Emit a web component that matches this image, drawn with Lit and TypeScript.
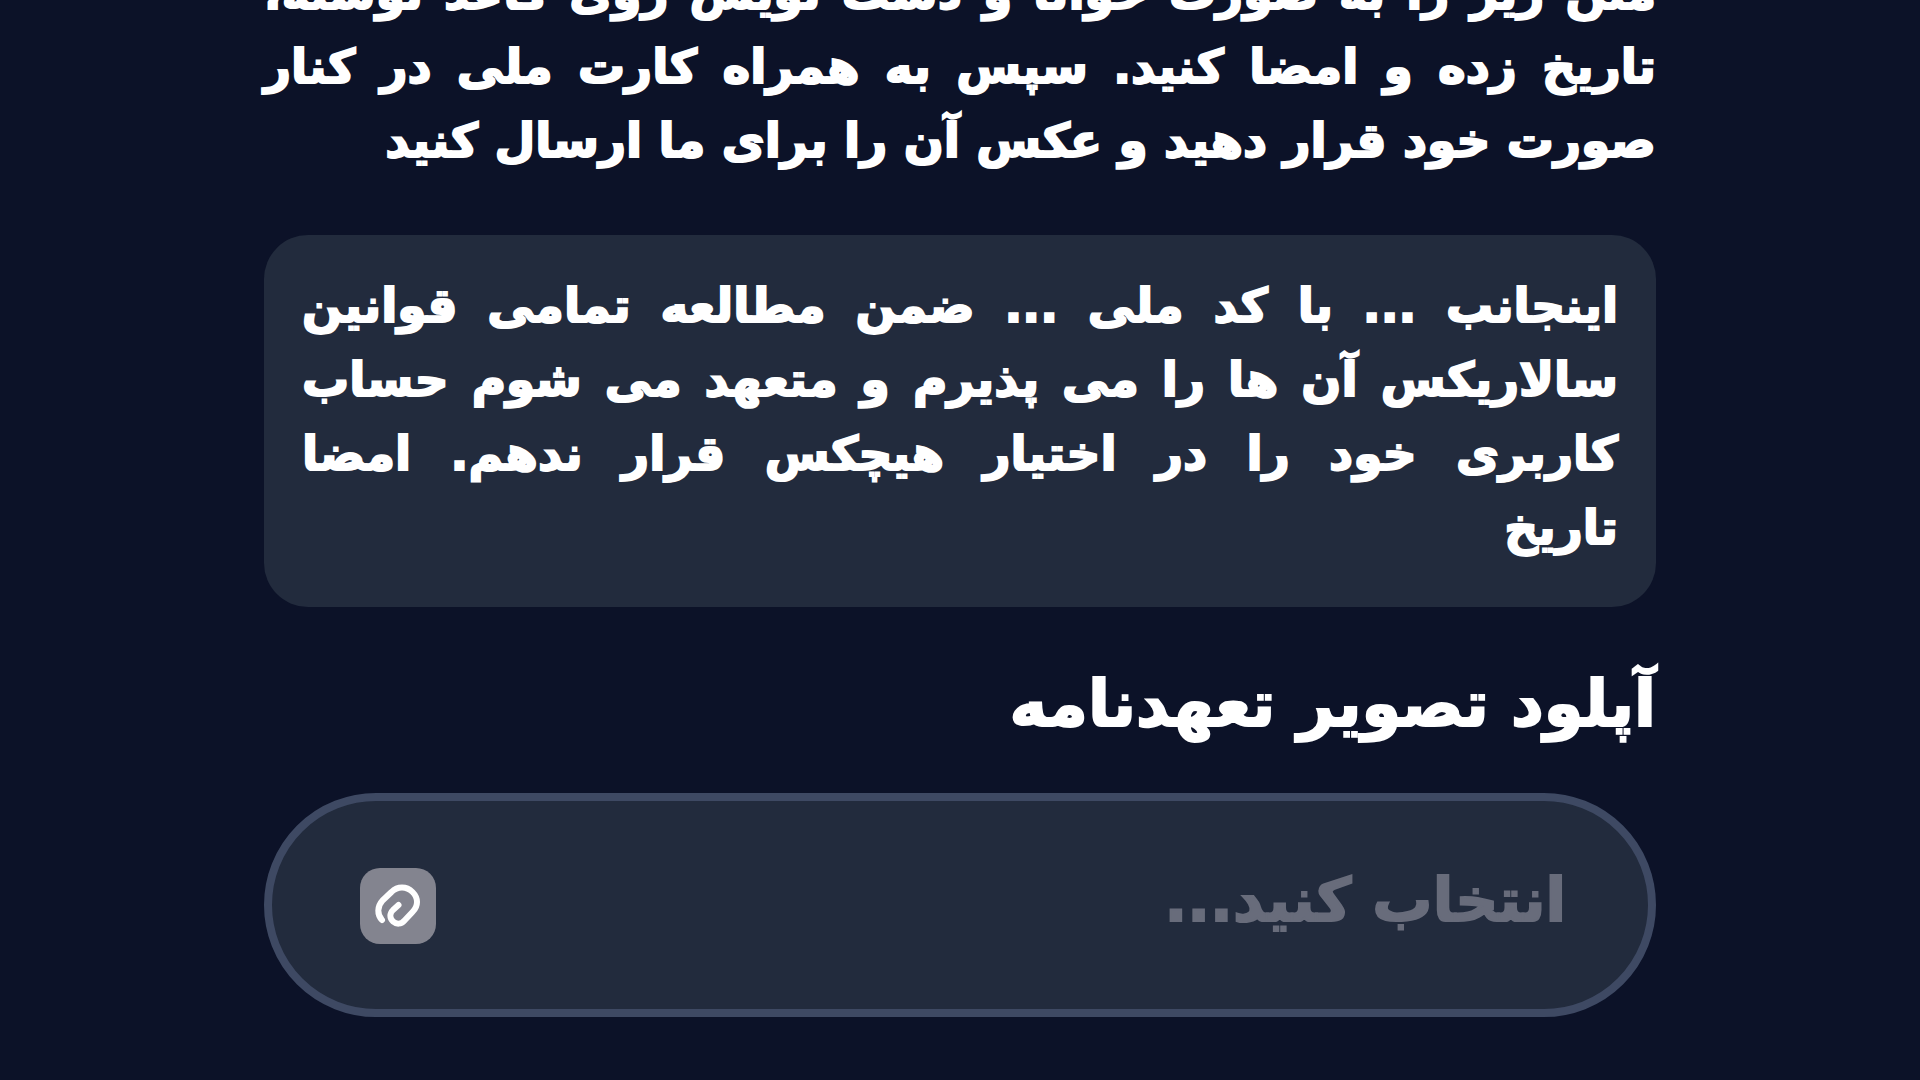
import { LitElement, html, css } from "lit";
import { customElement, state } from "lit/decorators.js";

@customElement("app-root")
export class AppRoot extends LitElement {
  @state() private fileName = "";

  static styles = css`
    :host {
      display: block;
      min-height: 100vh;
      overflow: hidden;
      background: #0c1228;
      color: #fff;
      font-family: "DejaVu Sans", sans-serif;
      font-weight: 700;
      -webkit-text-stroke: 2px currentColor;
    }
    * {
      box-sizing: border-box;
    }
    .page {
      width: 72.5%;
      margin: -44px auto 0;
    }
    .text {
      margin: 0;
      font-size: 47px;
      line-height: 74px;
    }
    .line {
      display: block;
      white-space: nowrap;
      text-align: justify;
      text-align-last: justify;
    }
    .last {
      text-align-last: start;
    }
    .card {
      margin: 57px 0 52px;
      padding: 34px 38px 42px;
      border-radius: 44px;
      background: #222b3d;
    }
    .label {
      display: block;
      font-size: 64px;
      line-height: 90px;
      margin-bottom: 44px;
    }
    .field {
      display: flex;
      align-items: center;
      justify-content: space-between;
      height: 224px;
      padding: 2px 82px 0 88px;
      border: 8px solid #3e4963;
      border-radius: 112px;
      background: #222b3d;
    }
    .input {
      flex: 1;
      min-width: 0;
      padding: 0 0 12px;
      border: 0;
      outline: 0;
      background: none;
      color: #fff;
      font: inherit;
      font-size: 60px;
    }
    .input::placeholder {
      color: #686c7b;
      opacity: 1;
    }
    .attach {
      width: 76px;
      height: 76px;
      padding: 0;
      border: 0;
      border-radius: 20px;
      background: #83848f;
      cursor: pointer;
    }
    .clip {
      display: block;
      width: 76px;
      height: 76px;
    }
  `;

  render() {
    return html`
      <main class="page" dir="rtl" lang="fa">
        <p class="text">
          <span class="line">متن زیر را به صورت خوانا و دست نویس روی کاغذ نوشته،</span>
          <span class="line">تاریخ زده و امضا کنید. سپس به همراه کارت ملی در کنار</span>
          <span class="line last">صورت خود قرار دهید و عکس آن را برای ما ارسال کنید</span>
        </p>
        <p class="text card">
          <span class="line">اینجانب ... با کد ملی ... ضمن مطالعه تمامی قوانین</span>
          <span class="line">سالاریکس آن ها را می پذیرم و متعهد می شوم حساب</span>
          <span class="line">کاربری خود را در اختیار هیچکس قرار ندهم. امضا</span>
          <span class="line last">تاریخ</span>
        </p>
        <label class="label" for="doc">آپلود تصویر تعهدنامه</label>
        <div class="field">
          <input class="input" id="doc" readonly placeholder="انتخاب کنید..." .value=${this.fileName} />
          <button class="attach" type="button" aria-label="انتخاب فایل">
            <svg class="clip" viewBox="0 0 76 76" fill="none" stroke="#fff" stroke-width="6" stroke-linecap="round" stroke-linejoin="round" aria-hidden="true">
              <path d="M22 52C17 46.500 17 38.500 22.500 32.500L31.500 24C37.500 18 46.500 18 52.500 24C58.500 30 58.500 38 52.500 44L44.500 52.500C41 56.500 36.500 56.500 33 53.500C29.500 50 29.500 45.500 33 42L38.500 37" />
            </svg>
          </button>
        </div>
      </main>
    `;
  }
}
